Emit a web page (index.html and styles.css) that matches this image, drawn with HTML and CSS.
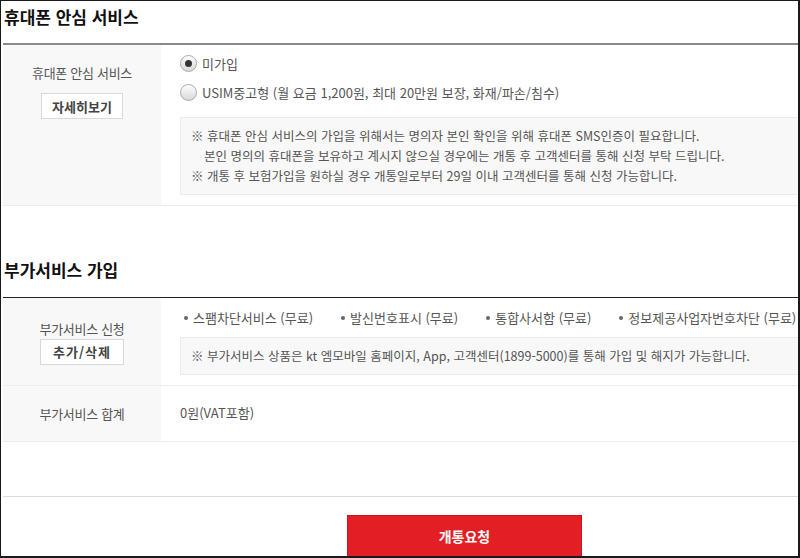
FILE: index.html
```html
<!DOCTYPE html>
<html lang="ko">
<head>
    <meta charset="UTF-8">
    <meta name="viewport" content="width=device-width, initial-scale=1.0">
    <title>개통 신청 - 부가서비스</title>
    <link rel="stylesheet" href="styles.css">
</head>
<body>
    <div class="frame">
        <div class="page">
            <h2 class="section-title first">휴대폰 안심 서비스</h2>
            <div class="form-table thick">
                <div class="form-row">
                    <div class="row-label top">
                        <p>휴대폰 안심 서비스</p>
                        <button class="sub-btn spaced">자세히보기</button>
                    </div>
                    <div class="row-body">
                        <label class="radio-item">
                            <span class="radio checked"></span>
                            <span>미가입</span>
                        </label>
                        <label class="radio-item">
                            <span class="radio"></span>
                            <span>USIM중고형 (월 요금 1,200원, 최대 20만원 보장, 화재/파손/침수)</span>
                        </label>
                        <div class="notice-box">
                            <p>※ 휴대폰 안심 서비스의 가입을 위해서는 명의자 본인 확인을 위해 휴대폰 SMS인증이 필요합니다.</p>
                            <p class="indent">본인 명의의 휴대폰을 보유하고 계시지 않으실 경우에는 개통 후 고객센터를 통해 신청 부탁 드립니다.</p>
                            <p>※ 개통 후 보험가입을 원하실 경우 개통일로부터 29일 이내 고객센터를 통해 신청 가능합니다.</p>
                        </div>
                    </div>
                </div>
            </div>

            <h2 class="section-title second">부가서비스 가입</h2>
            <div class="form-table thin">
                <div class="form-row">
                    <div class="row-label">
                        <p>부가서비스 신청</p>
                        <button class="sub-btn wide">추가/삭제</button>
                    </div>
                    <div class="row-body">
                        <ul class="service-list">
                            <li>스팸차단서비스 (무료)</li>
                            <li>발신번호표시 (무료)</li>
                            <li>통합사서함 (무료)</li>
                            <li>정보제공사업자번호차단 (무료)</li>
                        </ul>
                        <div class="notice-box">
                            <p>※ 부가서비스 상품은 kt 엠모바일 홈페이지, App, 고객센터(1899-5000)를 통해 가입 및 해지가 가능합니다.</p>
                        </div>
                    </div>
                </div>
                <div class="form-row">
                    <div class="row-label">
                        <p>부가서비스 합계</p>
                    </div>
                    <div class="row-body total">
                        <p>0원(VAT포함)</p>
                    </div>
                </div>
            </div>

            <div class="submit-area">
                <button class="submit-btn">개통요청</button>
            </div>
        </div>
    </div>
</body>
</html>
```

FILE: styles.css
```css
body {
    margin: 0;
    font-family: "Noto Sans CJK KR", sans-serif;
    color: #555;
    background: #fff;
}
p {
    margin: 0;
}
.frame {
    width: 800px;
    height: 558px;
    box-sizing: border-box;
    border: 1px solid #1a1a1a;
    border-right-width: 2px;
    border-bottom-width: 2px;
    padding-left: 2px;
    overflow: hidden;
}
.page {
    width: 923px;
}
.section-title {
    margin: 0;
    padding-left: 1px;
    font-size: 17px;
    line-height: 24px;
    font-weight: bold;
    color: #111;
}
.section-title.first {
    padding-top: 4px;
    padding-bottom: 14px;
}
.section-title.second {
    padding-top: 52px;
    padding-bottom: 15px;
}
.form-table.thick {
    border-top: 2px solid #8a8a8a;
}
.form-table.thin {
    border-top: 1px solid #222;
}
.form-row {
    display: flex;
    border-bottom: 1px solid #ececec;
}
.row-label {
    width: 158px;
    flex-shrink: 0;
    background-color: #f8f8f8;
    display: flex;
    flex-direction: column;
    align-items: center;
    justify-content: center;
    font-size: 13px;
    letter-spacing: -0.3px;
    line-height: 20px;
    color: #555;
}
.row-label.top {
    justify-content: flex-start;
    padding-top: 18px;
}
.sub-btn {
    font-family: inherit;
    background-color: #fff;
    border: 1px solid #d9d9d9;
    color: #444;
    font-size: 13px;
    font-weight: bold;
    height: 26px;
    padding: 0 10px;
    cursor: pointer;
}
.sub-btn.spaced {
    margin-top: 10px;
}
.sub-btn.wide {
    padding: 0 12px;
    letter-spacing: 1px;
}
.row-body {
    flex: 1;
    padding: 10px 0 10px 19px;
    font-size: 13px;
    line-height: 20px;
}
.row-body.total {
    padding-top: 17px;
    padding-bottom: 18px;
}
.radio-item {
    display: flex;
    align-items: center;
    gap: 5px;
    height: 29px;
    margin-top: -6px;
}
.radio-item + .radio-item {
    margin-top: 0;
}
.radio {
    width: 15px;
    height: 15px;
    border-radius: 50%;
    border: 1px solid #a9a9a9;
    background: linear-gradient(#fdfdfd, #d8d8d8);
    position: relative;
}
.radio.checked::after {
    content: "";
    position: absolute;
    left: 4px;
    top: 4px;
    width: 7px;
    height: 7px;
    border-radius: 50%;
    background-color: #333;
}
.notice-box {
    margin-top: 10px;
    background-color: #f8f8f8;
    border: 1px solid #ececec;
    padding: 8px 10px;
    font-size: 12.5px;
    line-height: 20px;
    color: #555;
}
.notice-box .indent {
    padding-left: 13px;
}
.service-list {
    list-style: none;
    margin: 0;
    padding: 0;
    display: flex;
    gap: 24px;
}
.service-list li {
    position: relative;
    padding-left: 13px;
}
.service-list li::before {
    content: "";
    position: absolute;
    left: 4px;
    top: 8px;
    width: 4px;
    height: 4px;
    border-radius: 50%;
    background-color: #666;
}
.service-list + .notice-box {
    margin-top: 9px;
}
.submit-area {
    margin-top: 54px;
    border-top: 1px solid #dcdcdc;
    padding-top: 18px;
    text-align: center;
}
.submit-btn {
    width: 235px;
    height: 42px;
    background-color: #e31e24;
    border: 1px solid #c8161c;
    color: #fff;
    font-family: inherit;
    font-size: 14px;
    font-weight: bold;
    cursor: pointer;
}
```
